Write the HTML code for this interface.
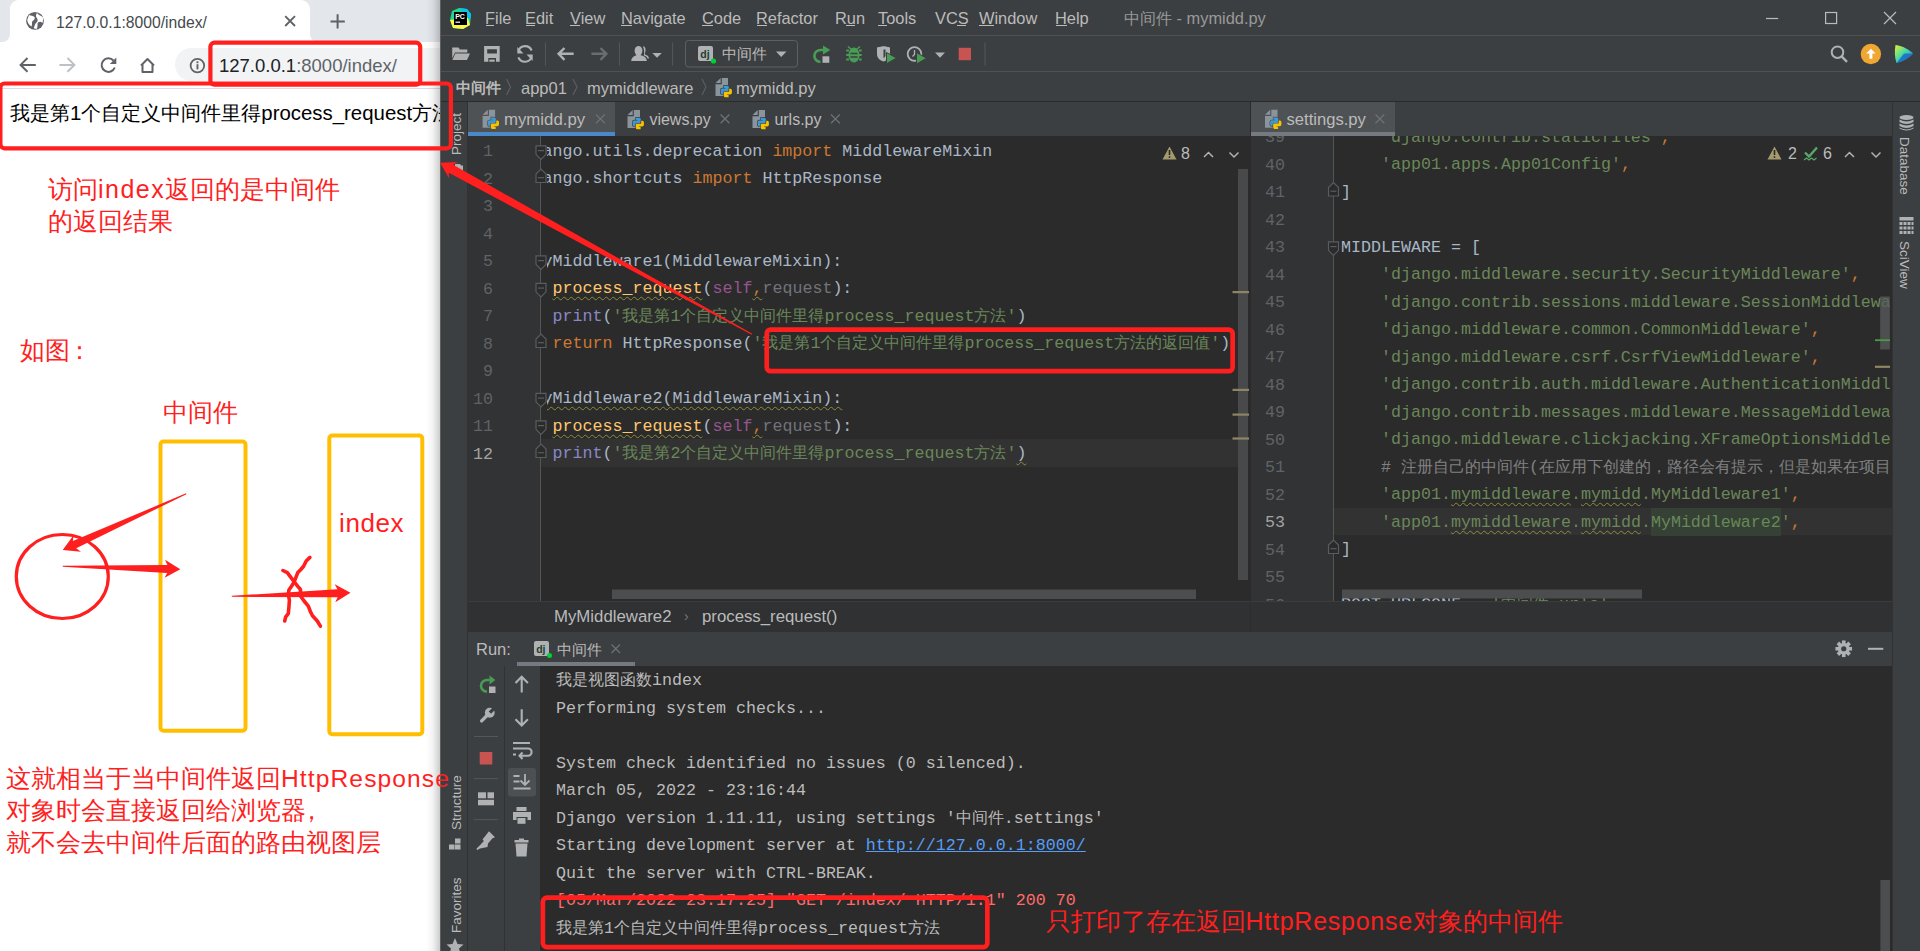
<!DOCTYPE html>
<html><head><meta charset="utf-8">
<style>
*{margin:0;padding:0;box-sizing:border-box}
html,body{width:1920px;height:951px;overflow:hidden;background:#fff}
body{position:relative;font-family:"Liberation Sans",sans-serif}
.a{position:absolute}
.t{position:absolute;white-space:pre;line-height:1}
/* browser */
#br{position:absolute;left:0;top:0;width:440px;height:951px;background:#fff;overflow:hidden}
/* ide */
#ide{position:absolute;left:0;top:0;width:1920px;height:951px;overflow:hidden;font-family:"Liberation Sans",sans-serif;color:#BBBBBB}
.mono{font-family:"Liberation Mono",monospace}
.code{position:absolute;white-space:pre;font-family:"Liberation Mono",monospace;font-size:16.67px;line-height:27.5px;color:#A9B7C6}
.ln{position:absolute;font-family:"Liberation Mono",monospace;font-size:16.67px;line-height:27.5px;color:#606366;text-align:right;white-space:pre}
.k{color:#CC7832}.s{color:#6A8759}.f{color:#FFC66D}.sf{color:#94558D}.b{color:#8888C6}.g{color:#72737A}.cm{color:#808080}
.cj{font-size:16.25px}
.wv{text-decoration:underline wavy #8C8C3C;text-decoration-skip-ink:none;text-decoration-thickness:1px;text-underline-offset:3px}
.hl{background:#344134;padding:4.5px 0}
.lk{color:#589DF6;text-decoration:underline}
.er{color:#FF6B68}
</style></head><body>

<div id="br">
  <!-- tab strip -->
  <div class="a" style="left:0;top:0;width:440px;height:42px;background:#E3E6EA"></div>
  <div class="a" style="left:0;top:0;width:330px;height:42px;background:#fff"></div>
  <div class="a" style="left:0;top:0;width:10px;height:42px;background:#E3E6EA;border-radius:0 0 8px 0"></div>
  <div class="a" style="left:310px;top:0;width:30px;height:42px;background:#E3E6EA;border-radius:0 0 0 8px"></div>
  <div class="a" style="left:0;top:0;width:10px;height:10px;background:#E3E6EA"></div>
  <div class="a" style="left:8px;top:0;width:14px;height:14px;background:#E3E6EA"></div>
  <div class="a" style="left:10px;top:0;width:300px;height:42px;background:#fff;border-radius:9px 9px 0 0"></div>
  <div class="a" style="left:298px;top:0;width:14px;height:14px;background:#E3E6EA"></div>
  <div class="a" style="left:10px;top:0;width:300px;height:42px;background:#fff;border-radius:9px 9px 0 0"></div>
  <!-- toolbar -->
  <div class="a" style="left:0;top:42px;width:440px;height:46px;background:#fff"></div>
  <div class="a" style="left:0;top:88px;width:440px;height:1px;background:#DADCE0"></div>
  <div class="a" style="left:175px;top:48px;width:300px;height:33px;background:#F1F3F4;border-radius:17px"></div>
  <div class="t" style="left:56px;top:15px;font-size:15.7px;color:#45494D">127.0.0.1:8000/index/</div>
  <svg class="a" style="left:0;top:0" width="440" height="100" viewBox="0 0 440 100">
    <circle cx="35" cy="20.9" r="8.9" fill="#5F6368"/>
    <path d="M29,15 C31,16 33,15.5 34.5,17 C35.5,18.5 34,20 32.5,21 C31.5,22 32.5,24 31.5,26.5 C29,25 27.5,22.5 27.2,20 Z M37,13 C38.5,15 40.5,15.5 42.8,17 C43.2,19 43,21 42.5,23 C41,21.5 39.5,21.5 38,22.5 C37,23.5 38,26 37,28.8 C35,29 33.5,28.5 34,27 C35,25.5 35,23.5 36.5,22.5 C38,21.5 38,19 36.5,17.5 C35.5,16.5 36,14 37,13 Z" fill="#fff"/>
    <path d="M285.2,16.2 L295,26 M295,16.2 L285.2,26" stroke="#5F6368" stroke-width="1.9"/>
    <path d="M337.6,14.3 V28.6 M330.5,21.45 H344.8" stroke="#5F6368" stroke-width="2"/>
    <path d="M35.8,64.9 H21 M27.5,58 L20.6,64.9 L27.5,71.8" fill="none" stroke="#5F6368" stroke-width="2"/>
    <path d="M59.4,64.9 H74 M67.5,58 L74.4,64.9 L67.5,71.8" fill="none" stroke="#BDC1C6" stroke-width="2"/>
    <path d="M113.5,60.5 A6.8,6.8 0 1 0 114.8,67.5" fill="none" stroke="#5F6368" stroke-width="2"/>
    <path d="M116.3,57.5 V64 H109.8 Z" fill="#5F6368"/>
    <path d="M141,65.5 L147.5,59 L154,65.5 M142.5,64 V72 H152.5 V64" fill="none" stroke="#5F6368" stroke-width="2" stroke-linejoin="round"/>
    <circle cx="197.4" cy="65.6" r="6.8" fill="none" stroke="#5F6368" stroke-width="1.8"/>
    <rect x="196.5" y="64.2" width="1.9" height="5.2" fill="#5F6368"/><rect x="196.5" y="61.3" width="1.9" height="1.9" fill="#5F6368"/>
  </svg>
  <div class="t" style="left:219px;top:56.5px;font-size:18.5px;color:#202124">127.0.0.1<span style="color:#5F6368">:8000/index/</span></div>
  <div class="a" style="left:426px;top:0;width:14px;height:951px;background:linear-gradient(to right,rgba(0,0,0,0),rgba(0,0,0,0.05) 50%,rgba(0,0,0,0.2))"></div>
  <div class="t" style="left:10px;top:102.5px;font-size:20.4px;color:#000">我是第1个自定义中间件里得process_request方法</div>
</div>

<div id="ide">
  <!-- base bg -->
  <div class="a" style="left:440px;top:0;width:1480px;height:951px;background:#3C3F41"></div>
  <div class="a" style="left:440px;top:0;width:1px;height:951px;background:#5E6060"></div>
  <!-- menu bar -->
  <div class="a" style="left:441px;top:35px;width:1479px;height:1px;background:#515151"></div>
  <div class="a" style="left:441px;top:71px;width:1479px;height:1px;background:#515151"></div>
  <div class="a" style="left:441px;top:101px;width:1479px;height:1px;background:#2B2B2B"></div>
  <div class="t" style="left:485px;top:10px;font-size:16.4px;color:#BBBBBB">File</div>
  <div class="t" style="left:525px;top:10px;font-size:16.4px;color:#BBBBBB">Edit</div>
  <div class="t" style="left:570px;top:10px;font-size:16.4px;color:#BBBBBB">View</div>
  <div class="t" style="left:621px;top:10px;font-size:16.4px;color:#BBBBBB">Navigate</div>
  <div class="t" style="left:702px;top:10px;font-size:16.4px;color:#BBBBBB">Code</div>
  <div class="t" style="left:756px;top:10px;font-size:16.4px;color:#BBBBBB">Refactor</div>
  <div class="t" style="left:835px;top:10px;font-size:16.4px;color:#BBBBBB">Run</div>
  <div class="t" style="left:878px;top:10px;font-size:16.4px;color:#BBBBBB">Tools</div>
  <div class="t" style="left:935px;top:10px;font-size:16.4px;color:#BBBBBB">VCS</div>
  <div class="t" style="left:979px;top:10px;font-size:16.4px;color:#BBBBBB">Window</div>
  <div class="t" style="left:1055px;top:10px;font-size:16.4px;color:#BBBBBB">Help</div>
  <div class="t" style="left:1124px;top:10px;font-size:16.4px;color:#999999">中间件 - mymidd.py</div>

  <!-- nav bar -->
  <div class="t" style="left:456px;top:80px;font-size:15px;color:#BBBBBB;font-weight:bold">中间件</div>
  <div class="t" style="left:521px;top:80px;font-size:16.5px;color:#BBBBBB">app01</div>
  <div class="t" style="left:587px;top:80px;font-size:16.5px;color:#BBBBBB">mymiddleware</div>
  <div class="t" style="left:736px;top:80px;font-size:16.5px;color:#BBBBBB">mymidd.py</div>

  <!-- left tool strip -->
  <div class="a" style="left:441px;top:102px;width:27px;height:849px;background:#3C3F41;border-right:1px solid #323232"></div>
  <!-- right tool strip -->
  <div class="a" style="left:1892px;top:102px;width:28px;height:849px;background:#3C3F41;border-left:1px solid #323232"></div>

  <!-- left editor -->
  <div class="a" style="left:468px;top:102px;width:782px;height:34px;background:#3C3F41"></div>
  <div class="a" style="left:468px;top:102px;width:147px;height:30px;background:#4E5254"></div>
  <div class="a" style="left:468px;top:132px;width:147px;height:4px;background:#4A88C7"></div>
  <div class="a" style="left:468px;top:136px;width:782px;height:465px;background:#2B2B2B"></div>
  <div class="a" style="left:468px;top:136px;width:73px;height:465px;background:#313335"></div>
  <div class="a" style="left:540px;top:136px;width:1px;height:465px;background:#555555"></div>

  <!-- divider -->
  <div class="a" style="left:1250px;top:102px;width:1px;height:499px;background:#2B2B2B"></div>

  <!-- right editor -->
  <div class="a" style="left:1251px;top:102px;width:641px;height:34px;background:#3C3F41"></div>
  <div class="a" style="left:1251px;top:102px;width:144px;height:30px;background:#4E5254"></div>
  <div class="a" style="left:1251px;top:132px;width:144px;height:4px;background:#747A80"></div>
  <div class="a" style="left:1251px;top:136px;width:641px;height:465px;background:#2B2B2B"></div>
  <div class="a" style="left:1251px;top:136px;width:82px;height:465px;background:#313335"></div>
  <div class="a" style="left:1333px;top:136px;width:1px;height:465px;background:#555555"></div>

  <!-- breadcrumbs bar -->
  <div class="a" style="left:468px;top:601px;width:1424px;height:31px;background:#2F3133"></div>
  <div class="t" style="left:554px;top:609px;font-size:16.8px;color:#BBBBBB">MyMiddleware2</div>
  <div class="t" style="left:684px;top:609px;font-size:14px;color:#777">›</div>
  <div class="t" style="left:702px;top:609px;font-size:16.8px;color:#BBBBBB">process_request()</div>

  <!-- run header -->
  <div class="a" style="left:468px;top:601px;width:1424px;height:1px;background:#3A3C3E"></div>
  <div class="a" style="left:1250px;top:601px;width:1px;height:31px;background:#2B2D2F"></div>
  <div class="a" style="left:468px;top:631.7px;width:1424px;height:33.5px;background:#3C3F41"></div>
  <div class="t" style="left:476px;top:641px;font-size:16.5px;color:#BBBBBB">Run:</div>
  <div class="t" style="left:557px;top:641.5px;font-size:15px;color:#BBBBBB">中间件</div>
  <div class="a" style="left:517px;top:662px;width:118px;height:4px;background:#747A80"></div>

  <!-- console -->
  <div class="a" style="left:468px;top:666px;width:1424px;height:285px;background:#2B2B2B"></div>
  <div class="a" style="left:468px;top:666px;width:36px;height:285px;background:#3C3F41"></div>
  <div class="a" style="left:504px;top:666px;width:36px;height:285px;background:#3C3F41;border-left:1px solid #323232"></div>
  <!-- left editor content -->
  <div class="a" style="left:541px;top:439px;width:697px;height:27.5px;background:#323232"></div>
  <div class="ln" style="left:468px;top:138.25px;width:25px">1
2
3
4
5
6
7
8
9
10
11
<span style="color:#A4A3A3">12</span></div>
  <div class="a" style="left:547px;top:136px;width:691px;height:465px;overflow:hidden">
    <div class="code" style="left:-74.5px;top:1.75px"><span class="k">from</span> django.utils.deprecation <span class="k">import</span> MiddlewareMixin
<span class="k">from</span> django.shortcuts <span class="k">import</span> HttpResponse


<span class="k">class</span> MyMiddleware1(MiddlewareMixin):
    <span class="k">def</span> <span class="f wv">process_request</span>(<span class="sf">self</span><span class="k wv">,</span><span class="g">request</span>):
        <span class="b">print</span>(<span class="s">'<span class="cj">我是第</span>1<span class="cj">个自定义中间件里得</span>process_request<span class="cj">方法</span>'</span>)
        <span class="k">return</span> HttpResponse(<span class="s">'<span class="cj">我是第</span>1<span class="cj">个自定义中间件里得</span>process_request<span class="cj">方法的返回值</span>'</span>)

<span class="k">class</span> <span class="wv">MyMiddleware2(MiddlewareMixin):</span>
    <span class="k">def</span> <span class="f wv">process_request</span>(<span class="sf">self</span><span class="k wv">,</span><span class="g">request</span>):
        <span class="b">print</span>(<span class="s">'<span class="cj">我是第</span>2<span class="cj">个自定义中间件里得</span>process_request<span class="cj">方法</span>'</span><span class="wv">)</span></div>
  </div>
  <!-- right editor content -->
  <div class="a" style="left:1334px;top:507.5px;width:558px;height:27.5px;background:#323232"></div>
  <div class="ln" style="left:1251px;top:124.25px;width:34px;height:476.75px;overflow:hidden;clip-path:inset(11.75px 0 0 0)">39
40
41
42
43
44
45
46
47
48
49
50
51
52
<span style="color:#A4A3A3">53</span>
54
55
56</div>
  <div class="a" style="left:1334px;top:136px;width:556px;height:465px;overflow:hidden">
    <div class="code" style="left:7px;top:-12.25px"><span class="s">    'django.contrib.staticfiles'</span><span class="k">,</span>
<span class="s">    'app01.apps.App01Config'</span><span class="k">,</span>
]

MIDDLEWARE = [
<span class="s">    'django.middleware.security.SecurityMiddleware'</span><span class="k">,</span>
<span class="s">    'django.contrib.sessions.middleware.SessionMiddleware'</span><span class="k">,</span>
<span class="s">    'django.middleware.common.CommonMiddleware'</span><span class="k">,</span>
<span class="s">    'django.middleware.csrf.CsrfViewMiddleware'</span><span class="k">,</span>
<span class="s">    'django.contrib.auth.middleware.AuthenticationMiddleware'</span><span class="k">,</span>
<span class="s">    'django.contrib.messages.middleware.MessageMiddleware'</span><span class="k">,</span>
<span class="s">    'django.middleware.clickjacking.XFrameOptionsMiddleware'</span><span class="k">,</span>
<span class="cm">    # <span class="cj">注册自己的中间件</span>(<span class="cj">在应用下创建的，路径会有提示，但是如果在项目下创建的就没有提示</span>)</span>
<span class="s">    'app01.</span><span class="s wv">mymiddleware</span><span class="s">.</span><span class="s wv">mymidd</span><span class="s">.MyMiddleware1'</span><span class="k">,</span>
<span class="s">    'app01.</span><span class="s wv">mymiddleware</span><span class="s">.</span><span class="s wv">mymidd</span><span class="s">.</span><span class="s hl">MyMiddleware2</span><span class="s">'</span><span class="k">,</span>
]

ROOT_URLCONF = <span class="s">'<span class="cj">中间件</span>.urls'</span></div>
  </div>
  <!-- console content -->
  <div class="a" style="left:541px;top:666px;width:1340px;height:285px;overflow:hidden">
    <div class="code" style="left:15px;top:1px;color:#BBBBBB"><span class="cj">我是视图函数</span>index
Performing system checks...

System check identified no issues (0 silenced).
March 05, 2022 - 23:16:44
Django version 1.11.11, using settings '<span class="cj">中间件</span>.settings'
Starting development server at <span class="lk">http://127.0.0.1:8000/</span>
Quit the server with CTRL-BREAK.
<span class="er">[05/Mar/2022 23:17:25] "GET /index/ HTTP/1.1" 200 70</span>
<span class="cj">我是第</span>1<span class="cj">个自定义中间件里得</span>process_request<span class="cj">方法</span></div>
  </div>
</div>

<div id="icons">
<svg class="a" style="left:0;top:0" width="1920" height="951" viewBox="0 0 1920 951">
  <defs>
    <symbol id="py" viewBox="0 0 17 20" overflow="visible">
      <path d="M0,5 L5.2,0 V5 Z" fill="#8A949C"/>
      <path d="M0,6.3 H6.3 V0 H12.5 V18 H0 Z" fill="#8A949C"/>
      <g stroke="currentColor" stroke-width="1.3" paint-order="stroke">
      <path d="M8.5,7.7 H11.5 Q13.4,7.7 13.4,9.6 V12.3 Q13.4,13.2 12.5,13.2 H8.8 Q7.9,13.2 7.9,14.1 V16.2 H6.7 Q5.2,16.2 5.2,14.5 V12.2 Q5.2,10.5 6.9,10.5 H10 V10 H8.5 Z" fill="#3D98D3"/>
      <path d="M8.5,7.7 H11.5 Q13.4,7.7 13.4,9.6 V12.3 Q13.4,13.2 12.5,13.2 H8.8 Q7.9,13.2 7.9,14.1 V16.2 H6.7 Q5.2,16.2 5.2,14.5 V12.2 Q5.2,10.5 6.9,10.5 H10 V10 H8.5 Z" fill="#F8C200" transform="rotate(180 10.8 13.5)"/>
      </g>
    </symbol>
    <symbol id="fs" viewBox="0 0 12 15" overflow="visible">
      <path d="M0.5,0.5 H10.5 V9 L5.5,14 L0.5,9 Z" fill="#2B2B2B" stroke="#5A5D5F" stroke-width="1.2"/>
      <path d="M2.5,5.3 H8.5" stroke="#5A5D5F" stroke-width="1.2"/>
    </symbol>
    <symbol id="fe" viewBox="0 0 12 15" overflow="visible">
      <path d="M0.5,14 H10.5 V5.5 L5.5,0.5 L0.5,5.5 Z" fill="#2B2B2B" stroke="#5A5D5F" stroke-width="1.2"/>
      <path d="M2.5,9.2 H8.5" stroke="#5A5D5F" stroke-width="1.2"/>
    </symbol>
  </defs>
  <!-- PC logo -->
  <g transform="translate(450,8)">
    <path d="M2,3 L9,0 L17,1 L21,6 L20,17 L13,21 L3,20 L0,12 Z" fill="#21D789"/>
    <path d="M9,0 L17,1 L21,6 L20,12 Z" fill="#07C3F2"/>
    <path d="M0,12 L3,20 L13,21 L20,17 L18,10 Z" fill="#FCF84A"/>
    <rect x="4" y="4" width="13" height="13" fill="#000"/>
    <text x="5.2" y="10.8" font-family="Liberation Sans" font-weight="bold" font-size="7" fill="#fff">PC</text>
    <rect x="5.5" y="13.6" width="4.5" height="1.2" fill="#fff"/>
  </g>
  <!-- toolbar icons -->
  <g fill="#AFB1B3">
    <path d="M452.2,47.6 H458.6 L459.8,49.4 H467.3 V52.6 H455 L452.2,58.5 Z"/>
    <path d="M455.3,53.5 H470 L467,60.1 H452.4 Z"/>
    <path d="M484.1,46 H499.7 V61.7 H496 V58 H488.3 V61.7 H484.1 Z M487.2,49.2 V53.6 H496.9 V49.2 Z"/>
    <rect x="489.3" y="59.6" width="5.4" height="2.1"/>
  </g>
  <g fill="none" stroke="#AFB1B3" stroke-width="2.2">
    <path d="M518.5,51 A7,7 0 0 1 531.6,50.5"/>
    <path d="M531.5,57 A7,7 0 0 1 518.4,57.4"/>
  </g>
  <g fill="#AFB1B3">
    <path d="M517.3,47 L517.3,53.5 L523.5,53.5 Z"/>
    <path d="M532.7,61 L532.7,54.5 L526.5,54.5 Z"/>
  </g>
  <g stroke="#545658" stroke-width="1"><path d="M545.5,42.4 V65.7 M619.5,42.4 V65.7 M672.6,42.4 V65.7 M985,42.4 V65.7"/></g>
  <g fill="none" stroke="#AFB1B3" stroke-width="2.4"><path d="M573.7,53.8 H559 M564.5,48 L558.6,53.8 L564.5,59.8"/></g>
  <g fill="none" stroke="#6A6C6E" stroke-width="2.4"><path d="M591.4,53.8 H606 M600.5,48 L606.4,53.8 L600.5,59.8"/></g>
  <g fill="#AFB1B3">
    <path d="M638.5,46 A3.9,4.4 0 0 1 642.4,50.4 C642.4,53 641.2,54.3 640.5,55.2 C644.5,56 646.6,57.5 646.8,61 H631.2 C631.4,57.5 633.5,56 636.5,55.2 C635.8,54.3 634.6,53 634.6,50.4 A3.9,4.4 0 0 1 638.5,46 Z"/>
    <path d="M643,46.2 C645.5,46.5 646,49 645.3,52 C645,53 644.6,54 645,54.6 C647.5,55.3 649,56.8 649,58.5 L647.5,58.5 C647.2,57 645.8,56 643.8,55.5 C644.5,53 644.3,50 643,46.2 Z"/>
    <path d="M652.3,53 H661.8 L657,57.7 Z"/>
  </g>
  <!-- run config combo -->
  <rect x="685.5" y="40.5" width="112" height="26.5" rx="3" fill="none" stroke="#5E6060" stroke-width="1"/>
  <rect x="698" y="46" width="15" height="15" rx="2" fill="#AFB1B3"/>
  <text x="700.3" y="57.5" font-family="Liberation Sans" font-weight="bold" font-size="10.5" fill="#1E4032">dj</text>
  <circle cx="713.5" cy="61" r="2.6" fill="#00D12E"/>
  <path d="M776,51.5 H786.5 L781.2,57 Z" fill="#AFB1B3"/>
  <!-- run icons -->
  <g fill="none" stroke="#499C54" stroke-width="2.6"><path d="M823,50 H820 A5.8,5.8 0 1 0 820.5,61.8"/></g>
  <path d="M823,45.5 L830.3,50 L823,54.5 Z" fill="#499C54"/>
  <rect x="822.5" y="56.3" width="6.8" height="6.5" fill="#AFB1B3"/>
  <g fill="#499C54">
    <ellipse cx="854" cy="55" rx="5.5" ry="7.6"/>
    <path d="M848,46.5 L851.5,49.5 M860,46.5 L856.5,49.5" stroke="#499C54" stroke-width="1.6"/>
    <path d="M846.2,50.5 H849 M846.2,55 H849 M846.2,59.5 H849 M859,50.5 H861.7 M859,55 H861.7 M859,59.5 H861.7" stroke="#499C54" stroke-width="1.8"/>
  </g>
  <path d="M850.5,53.5 H857.5 M850.5,57 H857.5" stroke="#3C3F41" stroke-width="1.4"/>
  <path d="M877,47.5 C880,47 882,46.3 883.5,46.3 C885.5,46.3 887.5,47 890,47.5 V54 C890,58 886,61 883.5,61.6 C880,60.5 877,58 877,54 Z" fill="#AFB1B3"/>
  <path d="M883.5,49.5 V58 C884.5,57.5 885.5,56.5 885.5,55 V49.5 Z" fill="#3C3F41"/>
  <path d="M886.5,52.5 L896.5,58 L886.5,63.7 Z" fill="#499C54" stroke="#3C3F41" stroke-width="1"/>
  <circle cx="914.5" cy="54" r="6.8" fill="none" stroke="#AFB1B3" stroke-width="1.8"/>
  <path d="M914.5,50 V54.5 L912.5,56.5" fill="none" stroke="#AFB1B3" stroke-width="1.3"/>
  <path d="M916.5,52.5 L926.5,58.2 L916.5,64 Z" fill="#499C54" stroke="#3C3F41" stroke-width="1"/>
  <path d="M935,52.5 H945 L940,57.8 Z" fill="#AFB1B3"/>
  <rect x="958.7" y="47.8" width="12.3" height="12.4" fill="#C75450"/>
  <!-- right side icons -->
  <circle cx="1837.5" cy="52.2" r="5.8" fill="none" stroke="#AFB1B3" stroke-width="2"/>
  <path d="M1841.6,56.4 L1847,61.8" stroke="#AFB1B3" stroke-width="2.4"/>
  <circle cx="1870.9" cy="54" r="10.2" fill="#F0A732"/>
  <path d="M1870.9,48.8 L1875.6,53.6 H1872.4 V58.8 H1869.4 V53.6 H1866.2 Z" fill="#fff"/>
  <defs><linearGradient id="lg" x1="0" y1="0" x2="1" y2="1"><stop offset="0" stop-color="#E8F22C"/><stop offset="0.5" stop-color="#3DD6B0"/><stop offset="1" stop-color="#1A6CD8"/></linearGradient></defs>
  <path d="M1895.5,45 C1903,46 1909,49.5 1913,53.5 C1909,58 1903,61.5 1896.5,63 C1894.5,57 1894.5,51 1895.5,45 Z" fill="url(#lg)"/>
  <path d="M1904,53.5 L1913,53.5 C1909,58 1903,61.5 1896.5,63 Z" fill="#1F62C9" opacity="0.8"/>
  <!-- window controls -->
  <path d="M1766,18.5 H1778.2" stroke="#BBBBBB" stroke-width="1.2"/>
  <rect x="1825.6" y="12.5" width="11" height="11" fill="none" stroke="#BBBBBB" stroke-width="1.2"/>
  <path d="M1884,12 L1896,24 M1896,12 L1884,24" stroke="#BBBBBB" stroke-width="1.2"/>
  <!-- nav bar chevrons -->
  <g fill="none" stroke="#5E6163" stroke-width="1.1">
    <path d="M506.5,79 L510.5,87 L506.5,95 M573,79 L577,87 L573,95 M702,79 L706,87 L702,95"/>
  </g>
  <use href="#py" x="715.5" y="78" width="17" height="20" color="#3C3F41"/>
  <!-- tabs -->
  <use href="#py" x="482.6" y="109.8" width="17" height="20" color="#4E5254"/>
  <use href="#py" x="627.5" y="110" width="17" height="20" color="#3C3F41"/>
  <use href="#py" x="752.5" y="110" width="17" height="20" color="#3C3F41"/>
  <use href="#py" x="1265" y="109.8" width="17" height="20" color="#4E5254"/>
  <g stroke="#6E7072" stroke-width="1.3">
    <path d="M596,114.5 L604.8,123.3 M604.8,114.5 L596,123.3"/>
    <path d="M720.6,114.5 L729.4,123.3 M729.4,114.5 L720.6,123.3"/>
    <path d="M831,114.5 L839.8,123.3 M839.8,114.5 L831,123.3"/>
    <path d="M1375.5,114.5 L1384.3,123.3 M1384.3,114.5 L1375.5,123.3"/>
  </g>
  <!-- fold markers left -->
  <!-- fold markers right -->
  <use href="#fs" x="535.5" y="145.3" width="12" height="15"/>
  <use href="#fs" x="535.5" y="255.3" width="12" height="15"/>
  <use href="#fs" x="535.5" y="282.8" width="12" height="15"/>
  <use href="#fs" x="535.5" y="392.8" width="12" height="15"/>
  <use href="#fs" x="535.5" y="420.3" width="12" height="15"/>
  <use href="#fe" x="535.5" y="168.5" width="12" height="15"/>
  <use href="#fe" x="535.5" y="333.5" width="12" height="15"/>
  <use href="#fe" x="535.5" y="443.5" width="12" height="15"/>
  <use href="#fe" x="1328" y="182.0" width="12" height="15"/>
  <use href="#fs" x="1328" y="241.3" width="12" height="15"/>
  <use href="#fe" x="1328" y="539.5" width="12" height="15"/>
</svg>
</div>
<div id="texts2">
  <!-- menu underlines -->
  <div class="a" style="left:486px;top:25px;width:8px;height:1px;background:#BBBBBB"></div>
  <div class="a" style="left:526px;top:25px;width:9px;height:1px;background:#BBBBBB"></div>
  <div class="a" style="left:570px;top:25px;width:10px;height:1px;background:#BBBBBB"></div>
  <div class="a" style="left:621px;top:25px;width:11px;height:1px;background:#BBBBBB"></div>
  <div class="a" style="left:702px;top:25px;width:11px;height:1px;background:#BBBBBB"></div>
  <div class="a" style="left:757px;top:25px;width:10px;height:1px;background:#BBBBBB"></div>
  <div class="a" style="left:846px;top:25px;width:9px;height:1px;background:#BBBBBB"></div>
  <div class="a" style="left:878px;top:25px;width:9px;height:1px;background:#BBBBBB"></div>
  <div class="a" style="left:957px;top:25px;width:9px;height:1px;background:#BBBBBB"></div>
  <div class="a" style="left:979px;top:25px;width:15px;height:1px;background:#BBBBBB"></div>
  <div class="a" style="left:1056px;top:25px;width:11px;height:1px;background:#BBBBBB"></div>
  <!-- combobox text -->
  <div class="t" style="left:722px;top:46px;font-size:15px;color:#BBBBBB">中间件</div>
  <!-- tab texts -->
  <div class="t" style="left:504px;top:111.5px;font-size:16.8px;color:#BBBBBB">mymidd.py</div>
  <div class="t" style="left:649.4px;top:111.5px;font-size:16px;color:#BBBBBB">views.py</div>
  <div class="t" style="left:774.4px;top:111.5px;font-size:16px;color:#BBBBBB">urls.py</div>
  <div class="t" style="left:1286.5px;top:111.5px;font-size:16.6px;color:#BBBBBB">settings.py</div>
  <!-- run tab -->
  <div class="a" style="left:534px;top:641px;width:15px;height:15px;border-radius:2px;background:#AFB1B3"></div>
  <div class="t" style="left:536.2px;top:643.5px;font-size:10.5px;font-weight:bold;color:#1E4032">dj</div>
  <div class="a" style="left:546.5px;top:653px;width:5px;height:5px;border-radius:50%;background:#00D12E"></div>
  <!-- warnings widget left -->
  <div class="t" style="left:1181px;top:146px;font-size:16px;color:#BBBBBB">8</div>
  <div class="t" style="left:1788px;top:146px;font-size:16px;color:#BBBBBB">2</div>
  <div class="t" style="left:1823px;top:146px;font-size:16px;color:#BBBBBB">6</div>
  <!-- tool strip labels -->
  <div class="t" style="left:449.5px;top:154.5px;font-size:13.5px;color:#BBBBBB;transform:rotate(-90deg);transform-origin:0 0">Project</div>
  <div class="t" style="left:450px;top:830px;font-size:13.5px;color:#BBBBBB;transform:rotate(-90deg);transform-origin:0 0">Structure</div>
  <div class="t" style="left:450px;top:933px;font-size:13.5px;color:#BBBBBB;transform:rotate(-90deg);transform-origin:0 0">Favorites</div>
  <div class="t" style="left:1911px;top:137px;font-size:13.5px;color:#BBBBBB;transform:rotate(90deg);transform-origin:0 0">Database</div>
  <div class="t" style="left:1911px;top:241px;font-size:13.5px;color:#BBBBBB;transform:rotate(90deg);transform-origin:0 0">SciView</div>
</div>
<div id="icons2">
<svg class="a" style="left:0;top:0" width="1920" height="951" viewBox="0 0 1920 951">
  <!-- left editor scrollbar + marks -->
  <rect x="1238" y="169" width="10" height="411" fill="#4B4D4F" opacity="0.9"/>
  <g fill="#8E8662"><rect x="1232.5" y="291" width="16.5" height="2.2"/><rect x="1232.5" y="388.8" width="16.5" height="2.2"/><rect x="1232.5" y="413.5" width="16.5" height="2.2"/><rect x="1232.5" y="437.4" width="16.5" height="2.2"/></g>
  <rect x="612" y="589.5" width="584" height="9.5" fill="#4B4D4F"/>
  <!-- right editor scrollbar -->
  <rect x="1880.2" y="296.5" width="9.6" height="53" fill="#5A5C5E" opacity="0.75"/>
  <rect x="1875" y="339.3" width="15" height="1.8" fill="#4A9A48"/>
  <rect x="1875" y="365.7" width="15" height="2.2" fill="#8E8662"/>
  <rect x="1342" y="589.5" width="300" height="9" fill="#4B4D4F"/>
  <!-- console scrollbar -->
  <rect x="1880.4" y="880" width="9.6" height="71" fill="#4B4D4F"/>
  <!-- warnings widget -->
  <path d="M1169.5,146.5 L1176.5,159.5 H1162.5 Z" fill="#A39A6E"/>
  <rect x="1168.7" y="150" width="1.6" height="5" fill="#2B2B2B"/><rect x="1168.7" y="156.3" width="1.6" height="1.6" fill="#2B2B2B"/>
  <path d="M1204,157 L1208.5,152.5 L1213,157 M1229.5,152.5 L1234,157 L1238.5,152.5" fill="none" stroke="#AFB1B3" stroke-width="1.5"/>
  <path d="M1774.5,146.5 L1781.5,159.5 H1767.5 Z" fill="#A39A6E"/>
  <rect x="1773.7" y="150" width="1.6" height="5" fill="#2B2B2B"/><rect x="1773.7" y="156.3" width="1.6" height="1.6" fill="#2B2B2B"/>
  <path d="M1805,152.5 L1809,156.5 L1817,147.5" fill="none" stroke="#59A869" stroke-width="2.4"/>
  <path d="M1804,160 L1806.5,158 L1809,160 L1811.5,158 L1814,160 L1816.5,158" fill="none" stroke="#59A869" stroke-width="1.2"/>
  <path d="M1845,157 L1849.5,152.5 L1854,157 M1871.5,152.5 L1876,157 L1880.5,152.5" fill="none" stroke="#AFB1B3" stroke-width="1.5"/>
  <!-- left strip icons -->
  <path d="M455,164 H460 L461,165.5 H463 V171 H455 Z" fill="#AFB1B3"/>
  <g fill="#AFB1B3"><rect x="455" y="838.5" width="5.5" height="5"/><rect x="449" y="844.5" width="5.5" height="5"/><rect x="455" y="844.5" width="5.5" height="5"/></g>
  <path d="M455,938 L457.5,944 L463.5,944.5 L459,948.5 L460.5,954 L455,951 L449.5,954 L451,948.5 L446.5,944.5 L452.5,944 Z" fill="#AFB1B3"/>
  <!-- right strip icons -->
  <g fill="#AFB1B3">
    <ellipse cx="1906.5" cy="117.5" rx="7" ry="2.5"/>
    <path d="M1899.5,119.5 Q1906.5,123.5 1913.5,119.5 V122 Q1906.5,126 1899.5,122 Z"/>
    <path d="M1899.5,123.5 Q1906.5,127.5 1913.5,123.5 V126 Q1906.5,130 1899.5,126 Z"/>
    <path d="M1899.5,127.5 Q1906.5,131.5 1913.5,127.5 V128.5 Q1906.5,132.5 1899.5,128.5 Z"/>
  </g>
  <g fill="#AFB1B3">
    <rect x="1899.5" y="217" width="14" height="3.5"/>
    <rect x="1899.5" y="222" width="3" height="3"/><rect x="1903.5" y="222" width="3" height="3"/><rect x="1907.5" y="222" width="3" height="3"/><rect x="1911.5" y="222" width="2" height="3"/>
    <rect x="1899.5" y="226.5" width="3" height="3"/><rect x="1903.5" y="226.5" width="3" height="3"/><rect x="1907.5" y="226.5" width="3" height="3"/><rect x="1911.5" y="226.5" width="2" height="3"/>
    <rect x="1899.5" y="231" width="3" height="3"/><rect x="1903.5" y="231" width="3" height="3"/><rect x="1907.5" y="231" width="3" height="3"/><rect x="1911.5" y="231" width="2" height="3"/>
  </g>
  <!-- run header icons -->
  <path d="M611.5,644.5 L620,653 M620,644.5 L611.5,653" stroke="#6E7072" stroke-width="1.3"/>
  <g transform="translate(1843.75,648.75)" fill="#AFB1B3">
    <circle r="5.8"/>
    <g><rect x="-1.8" y="-8.3" width="3.6" height="16.6"/><rect x="-1.8" y="-8.3" width="3.6" height="16.6" transform="rotate(45)"/><rect x="-1.8" y="-8.3" width="3.6" height="16.6" transform="rotate(90)"/><rect x="-1.8" y="-8.3" width="3.6" height="16.6" transform="rotate(135)"/></g>
    <circle r="2.6" fill="#3C3F41"/>
  </g>
  <rect x="1868" y="647.8" width="15.3" height="2" fill="#AFB1B3"/>
  <!-- console toolbar col1 -->
  <g fill="none" stroke="#499C54" stroke-width="2.6"><path d="M489.5,680 H486.5 A5.6,5.6 0 1 0 487,691.5"/></g>
  <path d="M489.5,675.6 L495.4,680 L489.5,684.5 Z" fill="#499C54"/>
  <rect x="489" y="686.5" width="6.5" height="6.5" fill="#AFB1B3"/>
  <g transform="translate(487.5,715) rotate(45)" fill="#AFB1B3"><rect x="-1.7" y="-1" width="3.4" height="11" rx="1.7"/><circle cx="0" cy="-3.2" r="4.9"/><rect x="-1.7" y="-9" width="3.4" height="5.6" fill="#3C3F41"/></g>
  
  <g stroke="#545658" stroke-width="1"><path d="M474,736.5 H498 M474,778.6 H498 M474,819.6 H498"/></g>
  <rect x="479.7" y="752" width="12.6" height="12.5" fill="#C75450"/>
  <g fill="#AFB1B3"><rect x="478" y="792.3" width="8" height="6"/><rect x="487.5" y="792.3" width="6.5" height="6"/><rect x="478" y="799.8" width="16" height="5.5"/></g>
  <path d="M489,831.2 L495,837.2 L492.5,838.2 L488,843.5 L487.5,847 L477.5,849 L484,841 L482.5,839.5 Z" fill="#AFB1B3"/>
  <path d="M477,849.5 L484.5,842" stroke="#AFB1B3" stroke-width="1.8"/>
  <!-- console toolbar col2 -->
  <g fill="none" stroke="#AFB1B3" stroke-width="2.1">
    <path d="M521.7,677 V692.4 M515.5,683 L521.7,676.8 L527.9,683"/>
    <path d="M521.7,709.2 V725 M515.5,719.2 L521.7,725.4 L527.9,719.2"/>
    <path d="M513,743 H530 M513,748.5 H528 A3.6,3.6 0 0 1 528,755.7 H520 M522.5,752.5 L519.5,755.7 L522.5,759 M513,754.5 H516"/>
  </g>
  <rect x="508" y="768" width="28" height="28.5" rx="3" fill="#4C5052"/>
  <g fill="none" stroke="#AFB1B3" stroke-width="1.8">
    <path d="M513.5,776 H519.5 M513.5,781.5 H519.5 M513.5,788.5 H530.5 M525,774 V785 M520.5,780.5 L525,785 L529.5,780.5"/>
  </g>
  <g fill="#AFB1B3">
    <rect x="516.5" y="807" width="10" height="4"/>
    <path d="M513,812 H531 V820 H527.5 V817 H516.5 V820 H513 Z"/>
    <rect x="517.5" y="818" width="8" height="5.8"/>
  </g>
  <g fill="#AFB1B3">
    <rect x="514.5" y="840" width="14" height="2.5"/>
    <rect x="519" y="838.5" width="5" height="2"/>
    <path d="M515.5,843.5 H527.5 L526.5,856.4 H516.5 Z"/>
  </g>
</svg>
</div>
<!-- annotations -->
<div id="ann">
  <div class="t" style="left:48px;top:176.5px;font-size:25px;color:#FF1F1F">访问<span style="letter-spacing:1.5px">index</span>返回的是中间件</div>
  <div class="t" style="left:48px;top:208.5px;font-size:25px;color:#FF1F1F">的返回结果</div>
  <div class="t" style="left:20px;top:338px;font-size:25px;color:#FF1F1F">如图<span style="margin-left:-3px">：</span></div>
  <div class="t" style="left:163px;top:401px;font-size:24.5px;color:#FF1F1F">中间件</div>
  <div class="t" style="left:339px;top:510px;font-size:26px;letter-spacing:0.6px;color:#FF1F1F">index</div>
  <div class="t" style="left:6px;top:767px;font-size:24.6px;color:#FF1F1F">这就相当于当中间件返回<span style="letter-spacing:1.1px">HttpResponse</span></div>
  <div class="t" style="left:6px;top:799px;font-size:24.6px;color:#FF1F1F">对象时会直接返回给浏览器<span style="margin-left:-7px">，</span></div>
  <div class="t" style="left:6px;top:831px;font-size:24.6px;color:#FF1F1F">就不会去中间件后面的路由视图层</div>
  <div class="t" style="left:1045.5px;top:909px;font-size:25px;color:#FF1F1F">只打印了存在返回<span style="letter-spacing:0.75px">HttpResponse</span>对象的中间件</div>
  <svg class="a" style="left:0;top:0" width="1920" height="951" viewBox="0 0 1920 951">
    <g fill="none" stroke="#FF1F1F" stroke-linejoin="round">
      <rect x="210.4" y="42.7" width="209.8" height="42" rx="4" stroke-width="4.2"/>
      <rect x="0.4" y="83.5" width="450.5" height="64.8" rx="4" stroke-width="4.2"/>
      <rect x="766.75" y="329.55" width="465.9" height="41.6" rx="4" stroke-width="4.7"/>
      <rect x="542.85" y="897.65" width="444.5" height="49.4" rx="4" stroke-width="4.7"/>
    </g>
    <g fill="none" stroke="#FFBF00" stroke-width="4">
      <rect x="160.5" y="441.5" width="85" height="289.2" rx="3"/>
      <rect x="329.3" y="435.6" width="93" height="298.7" rx="3"/>
    </g>
    <ellipse cx="62.3" cy="576.5" rx="46" ry="42" fill="none" stroke="#FF1F1F" stroke-width="3.2"/>
    <polygon fill="#FF1F1F" points="440,162.7 457.8,162 453.1,164.8 752.3,333.8 751.7,334.8 448.8,172.7 449,178.1"/>
    <polygon fill="#FF1F1F" points="62.7,550.1 73.5,535.3 72.9,541.1 186,493.3 186.4,494.2 76.2,548.3 81,551.65"/>
    <polygon fill="#FF1F1F" points="180.3,569.2 165,559.8 167.4,564.9 62.7,565.8 62.7,566.8 167.2,572.9 164.6,577.8"/>
    <polygon fill="#FF1F1F" points="350.5,592.8 334.7,584.3 337.4,589.2 231.8,595.8 231.8,596.8 337.6,597.2 335.3,602.3"/>
    <g fill="none" stroke="#FF1F1F" stroke-width="3.6" stroke-linecap="round" stroke-linejoin="round">
      <path d="M309.9,557.4 L306.2,561 L303.6,566.3 L300.4,570 L297.8,572.6 L295.7,577.9 L294.1,582.1 L291.5,586.3 L288.9,590 L288.3,594.7 L289.4,600 L288.9,607.3 L288.3,613.6 L285.7,616.8 L284.7,621"/>
      <path d="M282.9,570.5 L287.3,572.6 L290.5,576.8 L293.6,581 L297.8,586.3 L300.4,589.4 L301,596.8 L304.1,601 L308.3,606.2 L310.4,611.5 L312.5,615.7 L317.3,621 L320.4,626.2"/>
    </g>
  </svg>
</div>
</body></html>
